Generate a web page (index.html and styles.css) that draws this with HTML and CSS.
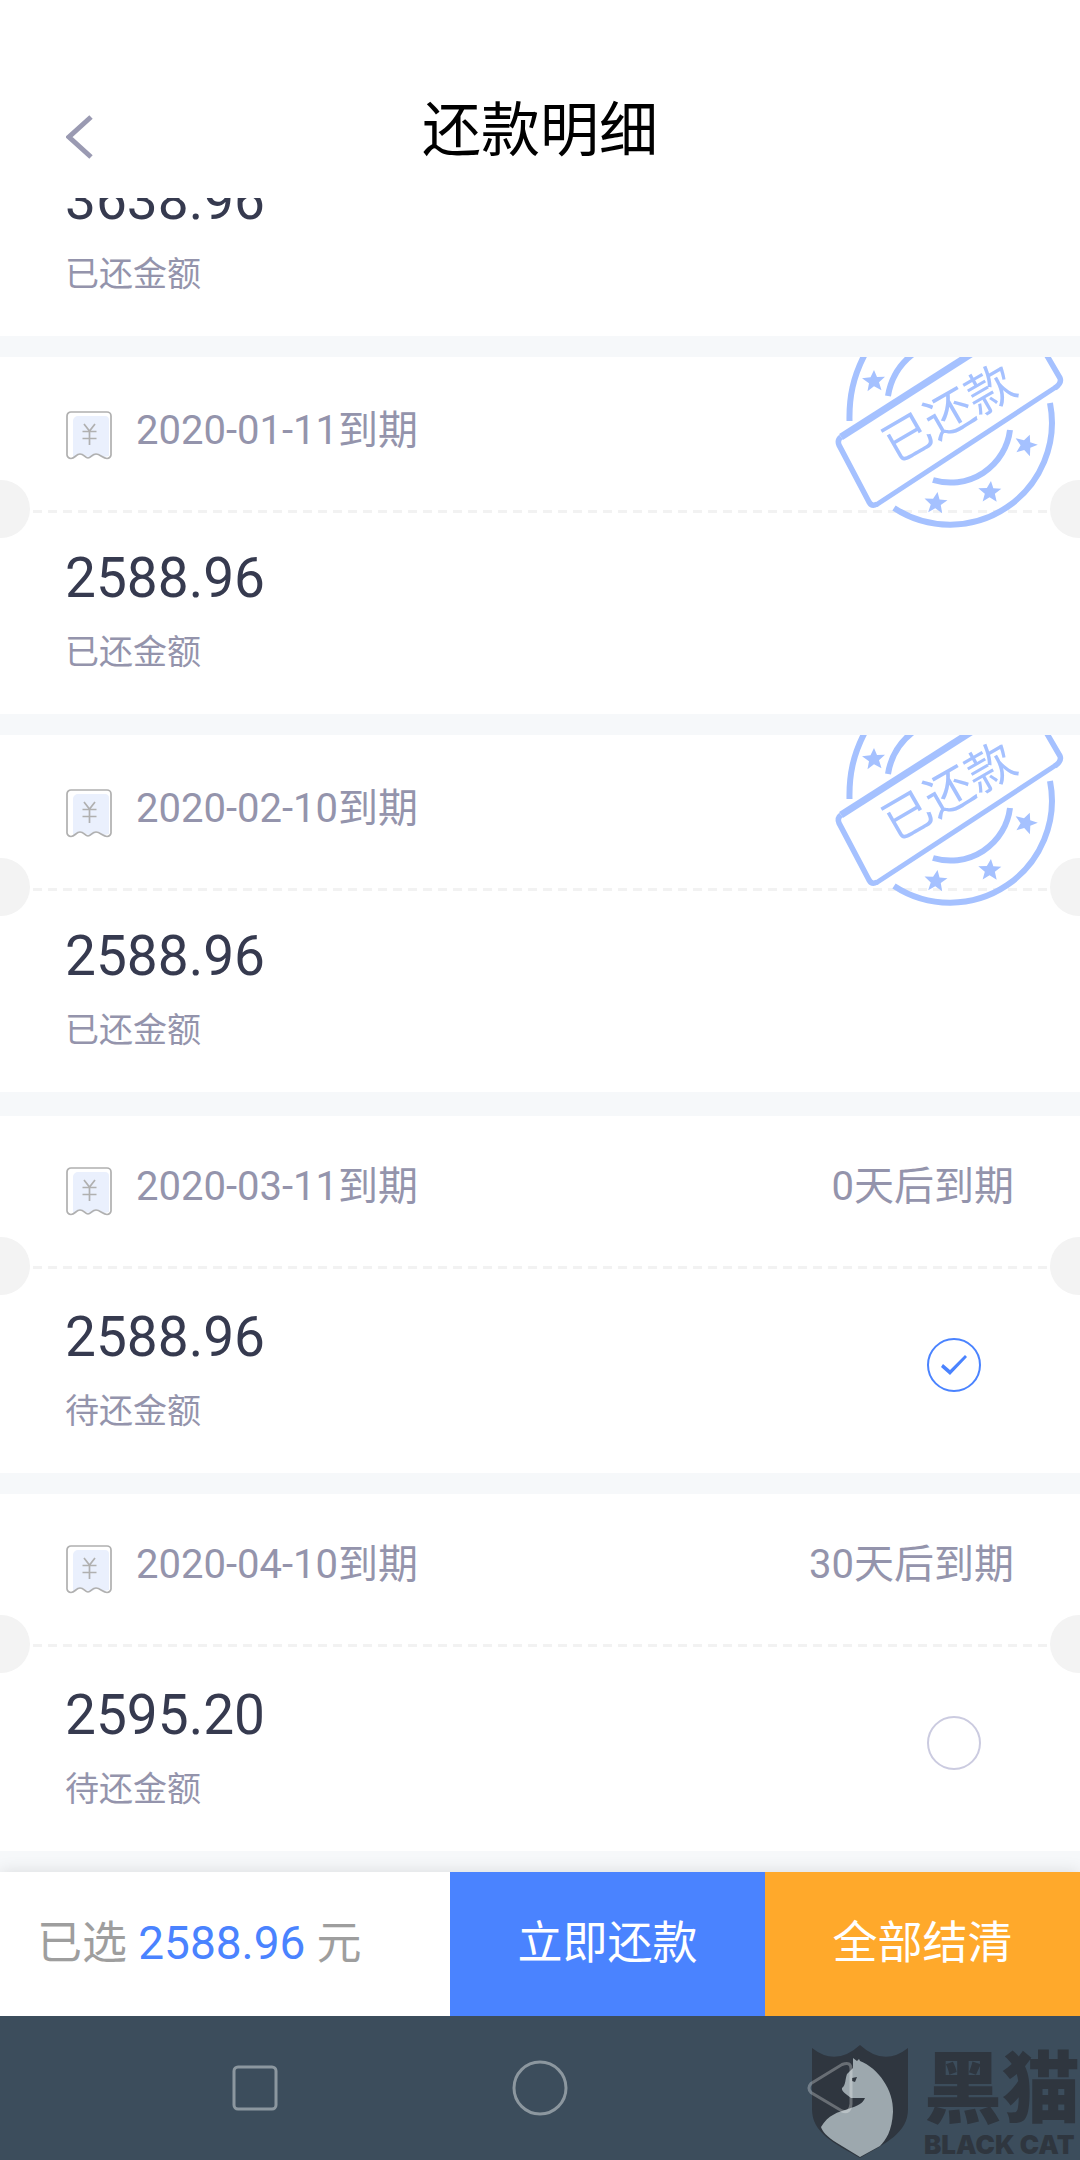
FILE: index.html
```html
<!DOCTYPE html>
<html lang="zh-CN">
<head>
<meta charset="utf-8">
<meta name="viewport" content="width=device-width, initial-scale=1">
<title>还款明细</title>
<link rel="stylesheet" href="styles.css">
</head>
<body>
<svg class="sprite" aria-hidden="true">
  <symbol id="receipt" viewBox="0 0 46 49">
    <path d="M12 5h27a4 4 0 0 1 4 4v36l-5 1-6-3-8 4-8-4-9 3V10a5 5 0 0 1 5-5z" fill="#eaf0fd"/>
    <path d="M5 1h36a4 4 0 0 1 4 4v38a4 4 0 0 1-4 4.500c-4 0-7-4.500-11-4.500s-5 4-8 4-4-4-8-4-5 4.500-9 4.500a4 4 0 0 1-4-4.500V5a4 4 0 0 1 4-4z" fill="none" stroke="#b0b0b0" stroke-width="1.700"/>
    <path d="M18 13l5.500 7 5.500-7M23.500 20v14M16.500 20.500h14M16.500 27.500h14" fill="none" stroke="#b0b0b0" stroke-width="1.700"/>
  </symbol>
  <symbol id="stamp" viewBox="0 0 240 180">
    <g transform="translate(3 3)">
      <g fill="none" stroke="#a5c1ff">
        <path stroke-width="6" d="M14.500 61C14 37 18 17 30 -6M59 148A102 102 0 0 0 215 43"/>
        <path stroke-width="6" d="M53 36A66 66 0 0 1 78 -6M98 120A60 60 0 0 0 175 70"/>
        <path stroke-width="7" d="M136 -6L6 77"/>
        <path stroke-width="5.500" d="M6 77Q2 80 4 85L34 142Q37 147 42 144"/>
        <path stroke-width="5" d="M41 145L221 27"/>
        <path stroke-width="5.500" d="M211 -6L225 18Q227 23 220 28"/>
      </g>
      <g fill="#a5c1ff">
        <path id="star" d="M39 10l3 7 8-.300-6 5.500 2.500 8-7.500-4-6.500 5 1.500-8-7-5 8.500-1z"/>
        <use href="#star" transform="translate(62 122) rotate(8 39 21)"/>
        <use href="#star" transform="translate(116 111) rotate(5 39 21)"/>
        <use href="#star" transform="translate(152 64) rotate(20 39 21)"/>
      </g>
      <text class="stamp-text" x="112" y="50" text-anchor="middle" dominant-baseline="central" transform="rotate(-30 112 50)">已还款</text>
    </g>
  </symbol>
</svg>

<header class="top">
  <button class="back" aria-label="返回">
    <svg width="28" height="44" viewBox="0 0 28 44"><path d="M25 2L3 22l22 20" fill="none" stroke="#9a9ab2" stroke-width="5"/></svg>
  </button>
  <h1>还款明细</h1>
</header>

<main class="list">
  <section class="card card-cut">
    <div class="amounts"><p class="amount">3638.96</p><p class="note">已还金额</p></div>
  </section>

  <section class="card">
    <svg class="stamp"><use href="#stamp"/></svg>
    <div class="due"><svg class="receipt"><use href="#receipt"/></svg><h2>2020-01-11到期</h2></div>
    <div class="tear"></div>
    <div class="amounts"><p class="amount">2588.96</p><p class="note">已还金额</p></div>
  </section>

  <section class="card">
    <svg class="stamp"><use href="#stamp"/></svg>
    <div class="due"><svg class="receipt"><use href="#receipt"/></svg><h2>2020-02-10到期</h2></div>
    <div class="tear"></div>
    <div class="amounts"><p class="amount">2588.96</p><p class="note">已还金额</p></div>
  </section>

  <section class="card pending">
    <div class="due"><svg class="receipt"><use href="#receipt"/></svg><h2>2020-03-11到期</h2><span class="days">0天后到期</span></div>
    <div class="tear"></div>
    <label class="pick">
      <span class="amounts"><span class="amount">2588.96</span><span class="note">待还金额</span></span>
      <input type="checkbox" class="tick" checked>
    </label>
  </section>

  <section class="card pending">
    <div class="due"><svg class="receipt"><use href="#receipt"/></svg><h2>2020-04-10到期</h2><span class="days">30天后到期</span></div>
    <div class="tear"></div>
    <label class="pick">
      <span class="amounts"><span class="amount">2595.20</span><span class="note">待还金额</span></span>
      <input type="checkbox" class="tick">
    </label>
  </section>
</main>

<footer class="bar">
  <p class="chosen">已选 <b>2588.96</b> 元</p>
  <button class="pay">立即还款</button>
  <button class="settle">全部结清</button>
</footer>

<nav class="system">
  <button aria-label="最近任务"><svg width="56" height="56" viewBox="0 0 56 56"><rect x="7" y="7" width="42" height="42" rx="4"/></svg></button>
  <button aria-label="主屏幕"><svg width="56" height="56" viewBox="0 0 56 56"><circle cx="28" cy="28" r="26"/></svg></button>
  <button class="system-back" aria-label="后退"><svg width="56" height="56" viewBox="0 0 56 56"><path d="M14 23.500L45 4.500Q54 1 54 9V44Q53 54 45 51L14 32.500Q10 28 14 23.500z"/></svg></button>
  <div class="mark">
    <svg width="100" height="116" viewBox="0 0 100 116">
      <path d="M2 3Q26 22 50 0Q74 22 98 3V64C98 88 76 98 50 113C24 98 2 88 2 64z" fill="#2f363f"/>
      <path d="M43 13l4 3 2-2 1 2C68 23 84 45 83 67C82 86 76 95 70 101L50 112L27 98C17 92 12 86 11 82C18 70 28 67 38 64C48 61 53 58 55 53H41C37 50 31 46 32 43C36 40 35 34 37 29L43 23z" fill="#9da8ae"/>
      <path d="M42 33l5-1-2 5-3-1z" fill="#2f363f"/>
    </svg>
    <p class="mark-name">黑猫<small>BLACK CAT</small></p>
  </div>
</nav>
</body>
</html>
```
FILE: styles.css
```css
* { box-sizing: border-box; }
html, body { height: 100%; }
body {
  margin: 0;
  display: flex;
  flex-direction: column;
  background: #f6f8fa;
  font-family: Roboto, "Noto Sans CJK SC", sans-serif;
  color: #363a4f;
  overflow: hidden;
}
h1, h2, p { margin: 0; font-weight: 400; }
button { border: 0; padding: 0; background: none; font: inherit; color: inherit; }
.sprite { position: absolute; width: 0; height: 0; }

.top {
  flex: none;
  display: grid;
  grid-template-columns: 160px 1fr 160px;
  height: 198px;
  padding-top: 87px;
  background: #fff;
}
.back { display: flex; align-items: flex-start; padding: 28px 0 0 66px; }
.top h1 { font-size: 59px; line-height: 88px; text-align: center; color: #000; }

.list { flex: 1; min-height: 0; overflow: hidden; display: flex; flex-direction: column; gap: 21px; }
.card { position: relative; flex: none; height: 357px; background: #fff; }
.card-cut { display: flex; flex-direction: column; justify-content: flex-end; height: 138px; overflow: hidden; }

.due { display: flex; align-items: flex-start; height: 153px; padding: 54px 66px 0; }
.receipt { width: 46px; height: 49px; }
.due h2, .days { font-size: 40px; line-height: 40px; color: #9494ac; }
.due h2 { margin-left: 24px; }
.days { margin-left: auto; }
.pending .due { height: 150px; padding-top: 51px; }
.card:not(.pending) + .pending { margin-top: 3px; }

.tear {
  height: 3px;
  margin: 0 33px;
  background: repeating-linear-gradient(90deg, #f2f2f2 0 9px, #fff 9px 15px);
}
.tear::before, .tear::after {
  content: "";
  position: absolute;
  width: 30px;
  height: 58px;
  margin-top: -30px;
  background: #f3f3f3;
}
.tear::before { left: 0; border-radius: 0 29px 29px 0; }
.tear::after { right: 0; border-radius: 29px 0 0 29px; }
.pending .tear::before, .pending .tear::after { margin-top: -29px; }

.stamp { position: absolute; top: 0; right: 8px; width: 240px; height: 180px; }
.stamp-text { font-family: "Noto Sans CJK SC", sans-serif; font-size: 48px; font-weight: 400; fill: #a5c1ff; }

.amounts { display: flex; flex-direction: column; padding: 32px 65px 0; }
.amount { font-size: 55px; line-height: 66px; }
.note { margin-top: 16px; font-size: 34px; line-height: 50px; color: #9494ac; }
.card-cut .amounts { padding: 0 65px 37px; }
.pick { display: flex; justify-content: space-between; }
.pending .amounts { padding-top: 35px; }
.tick {
  appearance: none;
  width: 54px;
  height: 54px;
  margin: 69px 99px 0 0;
  border: 2px solid #cbcbe0;
  border-radius: 50%;
}
.tick:checked {
  display: grid;
  place-items: center;
  border-color: #4a83ff;
}
.tick:checked::before {
  content: "";
  width: 26px;
  height: 20px;
  background: #4a83ff;
  clip-path: polygon(2px 9px, 9px 15px, 24px 0, 26px 2px, 9px 20px, 0 12px);
}

.bar {
  position: relative;
  flex: none;
  display: grid;
  grid-template-columns: 10fr 7fr 7fr;
  height: 144px;
  background: #fff;
  box-shadow: 0 0 16px rgba(0, 0, 0, .12);
  font-size: 45px;
  line-height: 144px;
}
.chosen { padding-left: 37px; color: #9e9e9e; white-space: nowrap; }
.chosen b { font-size: 46px; font-weight: 400; line-height: 1; color: #4a83ff; }
.pay, .settle { color: #fff; }
.pay { background: #4a83ff; }
.settle { background: #ffa92b; }

.system {
  position: relative;
  flex: none;
  display: grid;
  grid-template-columns: repeat(3, 285px);
  justify-content: center;
  align-items: center;
  height: 144px;
  background: #3c4d5c;
  overflow: hidden;
}
.system button svg { display: block; margin: auto; }
.system button svg * { fill: none; stroke: #8c979f; stroke-width: 3; }
.system .system-back { position: relative; z-index: 1; }
.system .system-back svg path { stroke: rgba(255, 255, 255, .28); }

/* watermark over the system bar */
.mark { position: absolute; right: 0; top: 29px; display: flex; gap: 14px; color: #2f363f; }
.mark-name { font-family: "Noto Sans CJK SC", sans-serif; font-size: 78px; font-weight: 900; line-height: 76px; white-space: nowrap; }
.mark-name small { display: block; margin-top: 12px; font-family: Inter, sans-serif; font-size: 26px; line-height: 24px; }
```
